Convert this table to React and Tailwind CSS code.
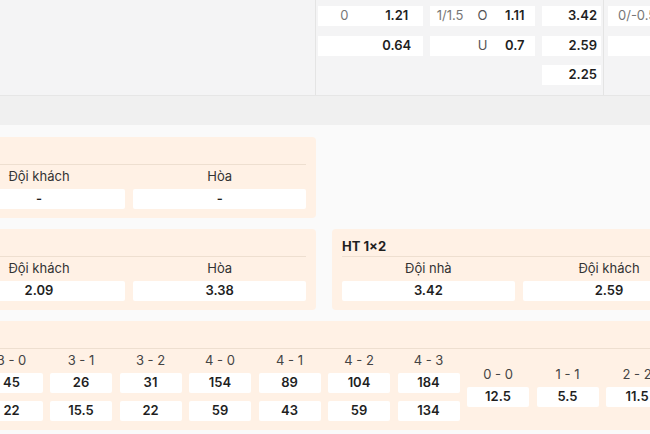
const oddsRows = [
  { hc: "0", home: "1.21", ou: "1/1.5", side: "O", val: "1.11", x: "3.42", ah2: "0/-0.5" },
  { hc: "", home: "0.64", ou: "", side: "U", val: "0.7", x: "2.59", ah2: "" },
  { hc: null, x: "2.25" },
];

const homeWins = [
  ["1 - 0", "7.5", "5.2"],
  ["2 - 0", "12", "8.5"],
  ["2 - 1", "10", "7.8"],
  ["3 - 0", "45", "22"],
  ["3 - 1", "26", "15.5"],
  ["3 - 2", "31", "22"],
  ["4 - 0", "154", "59"],
  ["4 - 1", "89", "43"],
  ["4 - 2", "104", "59"],
  ["4 - 3", "184", "134"],
];

const draws = [
  ["0 - 0", "12.5"],
  ["1 - 1", "5.5"],
  ["2 - 2", "11.5"],
  ["3 - 3", "61"],
];

function Cell({ children, className = "" }) {
  return (
    <div
      className={`h-5 bg-white rounded-[2px] flex items-center justify-center text-[13px] font-semibold text-[#1f1f1f] ${className}`}
    >
      {children}
    </div>
  );
}

function Card({ title, labels, values, className = "" }) {
  return (
    <div className={`bg-[#fff1e5] rounded-[4px] px-[10px] pt-2 pb-[9px] ${className}`}>
      <div className="h-5 flex items-center border-b border-[#eedfd0] text-[13px] font-bold text-[#1f1f1f]">
        {title}
      </div>
      <div className="grid grid-cols-3 gap-x-2">
        {labels.map((l) => (
          <div key={l} className="h-6 flex items-center justify-center text-[13px] text-[#333]">
            {l}
          </div>
        ))}
        {values.map((v, i) => (
          <Cell key={i}>{v}</Cell>
        ))}
      </div>
    </div>
  );
}

export default function App() {
  const labels = ["Đội nhà", "Đội khách", "Hòa"];
  return (
    <div
      className="w-[650px] h-[434px] overflow-hidden bg-[#fafafa]"
      style={{ fontFamily: "Inter, 'Noto Sans', sans-serif" }}
    >
      {/* odds table tail */}
      <div className="h-24 bg-[#f4f4f5] border-b border-[#e6e6e6] flex">
        <div className="w-[315px] shrink-0" />
        <div className="w-[289px] shrink-0 border-x border-[#e4e4e4] pl-[2px] pt-[6px] flex flex-col gap-[9.5px]">
          {oddsRows.map((r, i) => (
            <div key={i} className="flex gap-[7px] h-5 text-[13px]">
              {r.hc === null ? (
                <div className="w-[217px]" />
              ) : (
                <>
                  <div className="w-[105px] bg-white grid grid-cols-2 items-center text-center">
                    <span className="text-[#777]">{r.hc}</span>
                    <span className="font-semibold text-[#1f1f1f]">{r.home}</span>
                  </div>
                  <div className="w-[105px] bg-white grid grid-cols-3 items-center text-center px-1">
                    <span className="text-[#777]">{r.ou}</span>
                    <span className="text-[#555]">{r.side}</span>
                    <span className="font-semibold text-[#1f1f1f]">{r.val}</span>
                  </div>
                </>
              )}
              <div className="w-[59px] bg-white flex items-center justify-end pr-1 font-semibold text-[#1f1f1f]">
                {r.x}
              </div>
            </div>
          ))}
        </div>
        <div className="flex-1 pl-1 pt-[6px] flex flex-col gap-[9.5px]">
          <div className="h-5 bg-white flex items-center pl-[10px] text-[13px] text-[#777] whitespace-nowrap">
            0/-0.5
          </div>
          <div className="h-5 bg-white" />
        </div>
      </div>
      <div className="h-[29px] bg-[#f0f0f0]" />

      {/* markets */}
      <div className="ml-[-238px] pt-3 grid grid-cols-[554px_554px] gap-x-4 gap-y-[11px]">
        <Card title="1×2" labels={labels} values={["-", "-", "-"]} />
        <div />
        <Card title="1×2" labels={labels} values={["3.55", "2.09", "3.38"]} />
        <Card title="HT 1×2" labels={labels} values={["3.42", "2.59", "2.25"]} />

        <div className="col-span-2 bg-[#fff1e5] rounded-[4px] px-[10px] pt-2 pb-[9px]">
          <div className="h-5 flex items-center border-b border-[#eedfd0] text-[13px] font-bold text-[#1f1f1f]">
            Tỷ số chính xác
          </div>
          <div className="flex items-center gap-[7.5px]">
            {homeWins.map(([s, a, b]) => (
              <div key={s} className="w-[62px] shrink-0 flex flex-col">
                <div className="h-6 flex items-center justify-center text-[13px] text-[#444]">{s}</div>
                <Cell>{a}</Cell>
                <Cell className="mt-2">{b}</Cell>
              </div>
            ))}
            {draws.map(([s, a]) => (
              <div key={s} className="w-[62px] shrink-0 flex flex-col">
                <div className="h-6 flex items-center justify-center text-[13px] text-[#444]">{s}</div>
                <Cell>{a}</Cell>
              </div>
            ))}
          </div>
        </div>
      </div>
    </div>
  );
}
